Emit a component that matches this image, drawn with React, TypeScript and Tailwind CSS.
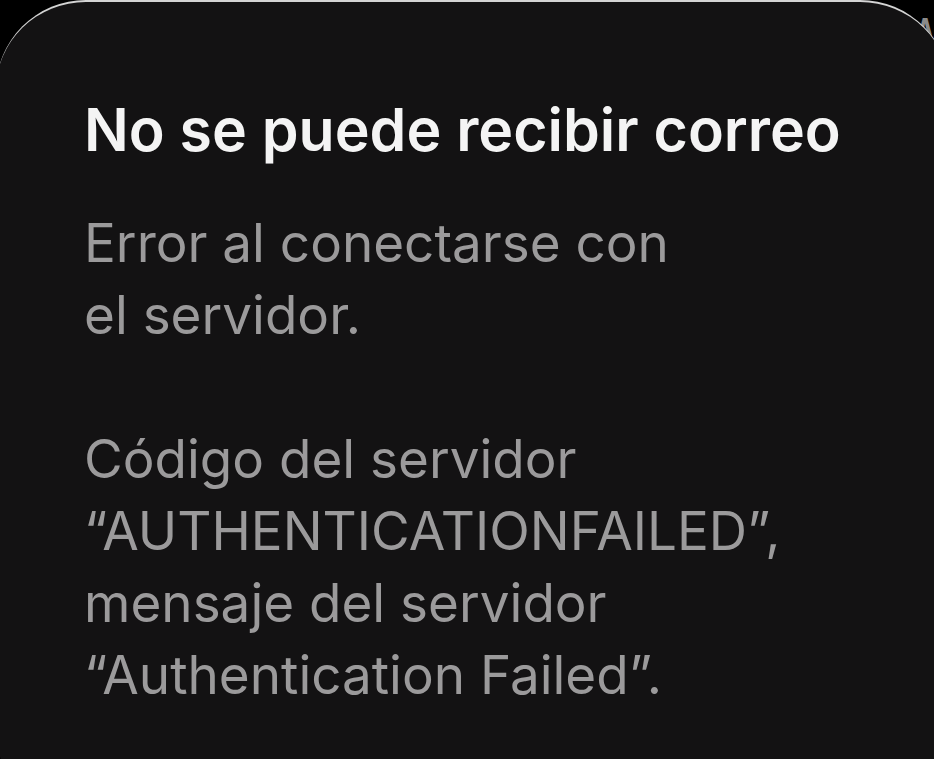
export default function App() {
  return (
    <div className="relative h-[759px] w-[934px] overflow-hidden bg-black" style={{ fontFamily: 'Inter, "Liberation Sans", sans-serif' }}>
      <span className="absolute left-[906px] top-[4px] text-[38px] font-medium text-[#8a8a8a]">W</span>
      <div className="relative z-10 ml-[-4px] h-[820px] w-[954px] rounded-[90px] border-t-2 border-[#d4d4d4] bg-[#131213] pl-[88px] pt-[94px]">
        <h1 className="text-[59px] font-semibold leading-[68px] text-[#f4f4f4]">
          No se puede recibir correo
        </h1>
        <p className="mt-[43px] text-[53px] font-normal leading-[72px] text-[#9b9a9b]">
          Error al conectarse con
          <br />
          el servidor.
          <br />
          <br />
          Código del servidor
          <br />
          “AUTHENTICATIONFAILED”,
          <br />
          mensaje del servidor
          <br />
          “Authentication Failed”.
        </p>
      </div>
    </div>
  );
}
